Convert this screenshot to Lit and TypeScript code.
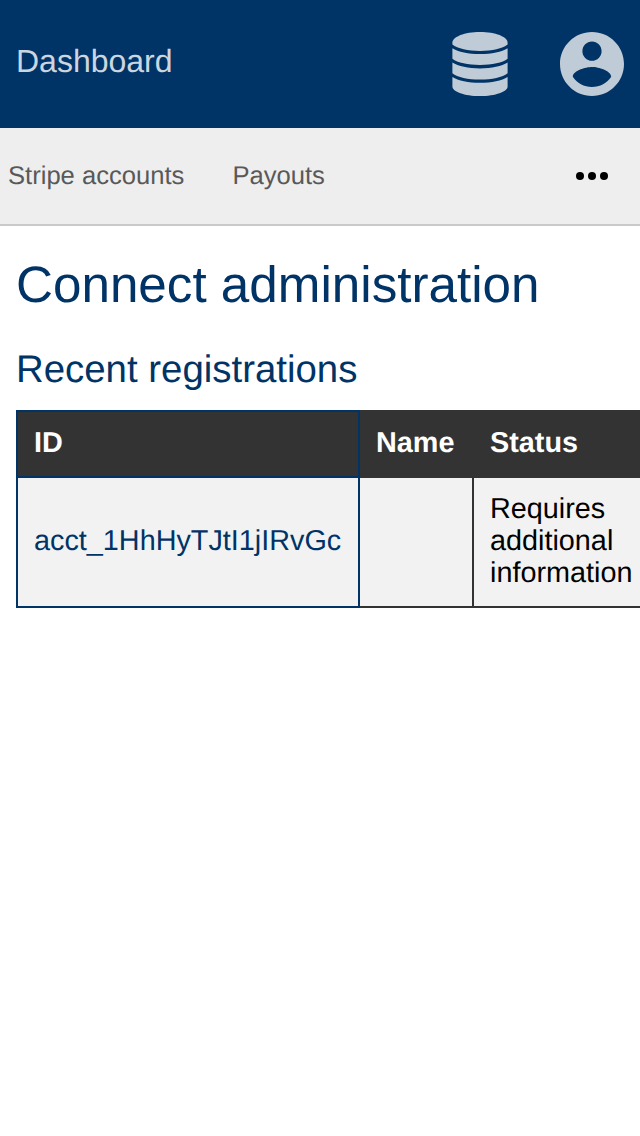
import { LitElement, html, css } from "lit";
import { customElement } from "lit/decorators.js";

@customElement("app-root")
export class AppRoot extends LitElement {
  static styles = css`
    :host {
      display: block;
      height: 100vh;
      overflow: hidden;
      background: #fff;
      color: #000;
      font-family: "Liberation Sans", Arial, sans-serif;
      text-rendering: geometricPrecision;
    }
    .header {
      display: flex;
      align-items: center;
      box-sizing: border-box;
      height: 128px;
      padding: 0 16px;
      background: #003366;
    }
    .brand {
      flex: 1;
      padding-bottom: 6px;
      color: #ccd6e0;
      font-size: 32px;
      line-height: 36px;
      text-decoration: none;
    }
    .icons {
      display: flex;
      gap: 52px;
      color: #bfccd8;
    }
    .icons svg, .more svg { display: block; fill: currentColor; }
    .nav {
      display: flex;
      align-items: center;
      gap: 48px;
      box-sizing: border-box;
      height: 98px;
      padding: 0 32px 0 8px;
      border-bottom: 2px solid #c9c9c9;
      background: #eee;
      font-size: 25.6px;
      line-height: 30px;
    }
    .link { color: #595959; text-decoration: none; }
    .more { margin-left: auto; color: #000; }
    .content { padding: 0 16px; }
    h1, h2 { margin: 0; color: #003366; font-weight: 400; }
    h1 { padding-top: 30px; font-size: 51.2px; line-height: 58px; }
    h2 { padding: 34px 0 18px; font-size: 38.4px; line-height: 44px; }
    .table {
      width: 636px;
      table-layout: fixed;
      border-collapse: collapse;
      font-size: 28.8px;
      line-height: 32px;
    }
    .id-col { width: 342px; }
    .name-col { width: 114px; }
    th, td {
      padding: 15px 16px 17px;
      border: 2px solid #333;
      text-align: left;
      vertical-align: middle;
    }
    th { background: #333; color: #fff; font-weight: 700; }
    td { background: #f2f2f2; }
    th.id, td.id { border-color: #003366; }
    .id a { color: #003366; text-decoration: none; }
  `;

  render() {
    return html`
      <header class="header">
        <a class="brand">Dashboard</a>
        <div class="icons">
          <svg width="56" height="64" viewBox="0 0 56 64">
            <path d="M.4 10.6C.4 4.8 12.5 0 28 0s27.6 4.8 27.6 10.6v2C50.6 16.6 40 19 28 19S5.4 16.6.4 12.6z" />
            <path d="M.4 16.2C6 20 16.5 22 28 22s22-2 27.6-5.8v10.6C50.6 30.8 40 33 28 33S5.4 30.8.4 26.8z" />
            <path d="M.4 30.6C6 34.4 16.5 36.4 28 36.4s22-2 27.6-5.8v10.6c-5 4-15.6 6.4-27.6 6.4S5.4 45.2.4 41.2z" />
            <path d="M.4 45C6 48.8 16.5 50.8 28 50.8s22-2 27.6-5.8v9.4C55.6 59.5 43.5 64 28 64S.4 59.5.4 54.4z" />
          </svg>
          <svg width="64" height="64" viewBox="2 2 20 20">
            <path d="M12 2C6.48 2 2 6.48 2 12s4.48 10 10 10 10-4.48 10-10S17.52 2 12 2zm0 3c1.66 0 3 1.34 3 3s-1.34 3-3 3-3-1.34-3-3 1.34-3 3-3zm0 14.2c-2.5 0-4.71-1.28-6-3.22.03-1.99 4-3.08 6-3.08 1.99 0 5.97 1.09 6 3.08-1.29 1.94-3.5 3.22-6 3.22z" />
          </svg>
        </div>
      </header>
      <nav class="nav">
        <a class="link">Stripe accounts</a>
        <a class="link">Payouts</a>
        <span class="more">
          <svg width="32" height="8" viewBox="0 0 32 8">
            <circle cx="4" cy="4" r="4" />
            <circle cx="16" cy="4" r="4" />
            <circle cx="28" cy="4" r="4" />
          </svg>
        </span>
      </nav>
      <main class="content">
        <h1>Connect administration</h1>
        <h2>Recent registrations</h2>
        <table class="table">
          <colgroup><col class="id-col" /><col class="name-col" /><col /></colgroup>
          <thead>
            <tr><th class="id">ID</th><th>Name</th><th>Status</th></tr>
          </thead>
          <tbody>
            <tr>
              <td class="id"><a>acct_1HhHyTJtI1jIRvGc</a></td>
              <td></td>
              <td>Requires additional information</td>
            </tr>
          </tbody>
        </table>
      </main>
    `;
  }
}
